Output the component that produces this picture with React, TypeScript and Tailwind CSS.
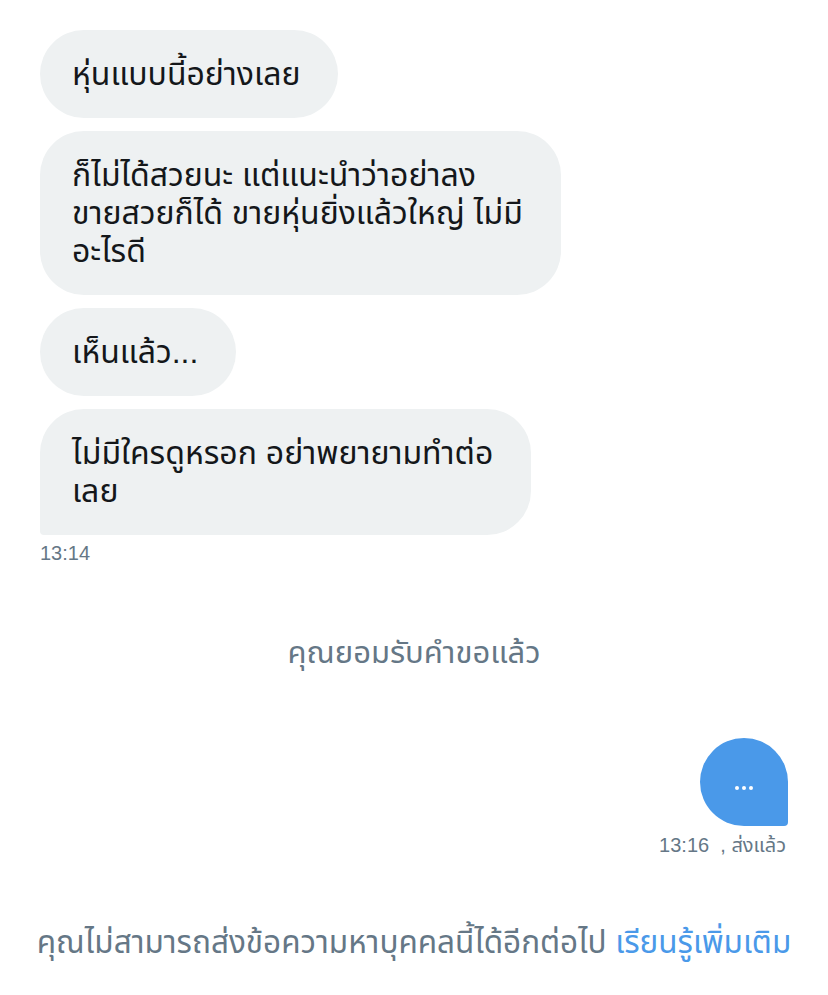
import React from "react";

const font = { fontFamily: '"Liberation Sans", "Noto Sans Thai", "Noto Sans", sans-serif' };

function Bubble({ children, last }: { children: React.ReactNode; last?: boolean }) {
  return (
    <div
      className={
        "self-start bg-[#eef1f2] text-[#14171a] text-[32px] leading-[38px] pl-8 pr-[38px] py-[25px] rounded-[44px] whitespace-nowrap " +
        (last ? "rounded-bl-[4px]" : "")
      }
    >
      {children}
    </div>
  );
}

export default function App() {
  return (
    <div className="w-[828px] h-[995px] bg-white flex flex-col" style={font}>
      <div className="flex flex-col gap-[13px] pl-10 pt-[30px]">
        <Bubble>หุ่นแบบนี้อย่างเลย</Bubble>
        <Bubble>
          ก็ไม่ได้สวยนะ แต่แนะนำว่าอย่าลง
          <br />
          ขายสวยก็ได้ ขายหุ่นยิ่งแล้วใหญ่ ไม่มี
          <br />
          อะไรดี
        </Bubble>
        <Bubble>เห็นแล้ว...</Bubble>
        <Bubble last>
          ไม่มีใครดูหรอก อย่าพยายามทำต่อ
          <br />
          เลย
        </Bubble>
      </div>
      <div className="pl-10 mt-[6px] text-[20px] leading-[24px] text-[#657786]">13:14</div>
      <div className="mt-[71px] text-center text-[31px] leading-[34px] text-[#657786]">คุณยอมรับคำขอแล้ว</div>
      <div className="flex justify-end pr-10 mt-[68px]">
        <div className="w-[88px] h-[88px] bg-[#4a99e9] rounded-[44px] rounded-br-[4px] flex items-center justify-center gap-[3px] pt-[12px]">
          <span className="w-[4px] h-[4px] rounded-full bg-white" />
          <span className="w-[4px] h-[4px] rounded-full bg-white" />
          <span className="w-[4px] h-[4px] rounded-full bg-white" />
        </div>
      </div>
      <div className="flex justify-end pr-[42px] mt-[7px] text-[20px] leading-[24px] text-[#657786] whitespace-pre">13:16  , ส่งแล้ว</div>
      <div className="mt-[67px] text-center text-[31.5px] leading-[36px] text-[#657786] whitespace-nowrap">
        คุณไม่สามารถส่งข้อความหาบุคคลนี้ได้อีกต่อไป <span className="text-[#4a99e9]">เรียนรู้เพิ่มเติม</span>
      </div>
    </div>
  );
}
